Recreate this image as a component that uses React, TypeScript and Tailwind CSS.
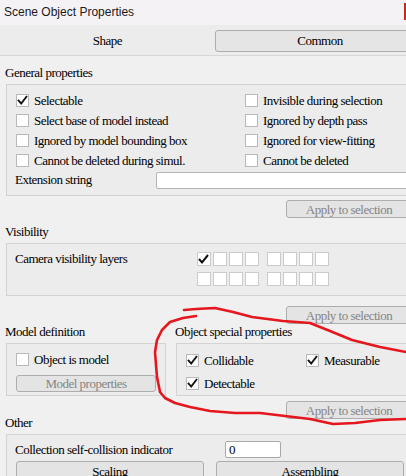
import React from "react";

const Check = ({ checked }: { checked?: boolean }) => (
  <div className="w-[13px] h-[13px] bg-white border border-[#b9b9b9] flex items-center justify-center shrink-0">
    {checked && (
      <svg width="11" height="11" viewBox="0 0 11 11">
        <path d="M1.6 5.6 L4.2 8.6 L9.4 1.8" fill="none" stroke="#111" strokeWidth="1.9" strokeLinecap="square" />
      </svg>
    )}
  </div>
);

const CheckRow = ({ label, checked, h = "h-[20px]" }: { label: string; checked?: boolean; h?: string }) => (
  <div className={`flex items-center gap-[5px] ${h}`}>
    <Check checked={checked} />
    <span className="whitespace-nowrap leading-none">{label}</span>
  </div>
);

const Btn = ({ label, cls, dim }: { label: string; cls: string; dim?: boolean }) => (
  <div
    className={`${cls} shrink-0 border border-[#adadad] rounded-[3px] bg-[#e4e4e4] flex items-center justify-center whitespace-nowrap leading-none ${
      dim ? "text-[#858585]" : "text-black"
    }`}
  >
    {label}
  </div>
);

const Label = ({ text, cls = "" }: { text: string; cls?: string }) => (
  <div className={`h-[16px] leading-[16px] mb-[3px] whitespace-nowrap ${cls}`}>{text}</div>
);

const Cell = ({ checked }: { checked?: boolean }) => (
  <div className="w-[14px] h-[14px] bg-white border border-[#cbcbcb] flex items-center justify-center">
    {checked && (
      <svg width="12" height="12" viewBox="0 0 12 12">
        <path d="M1 6 L4 9.4 L10 2" fill="none" stroke="#111" strokeWidth="2" />
      </svg>
    )}
  </div>
);

const CellGroup = ({ first }: { first?: boolean }) => (
  <div className="flex gap-[2px]">
    <Cell checked={first} />
    <Cell />
    <Cell />
    <Cell />
  </div>
);

export default function App() {
  return (
    <div className="w-[406px] h-[476px] overflow-hidden relative bg-[#f0f0f0] font-['Liberation_Serif',serif] text-[13px] tracking-[-0.5px] text-black">
      {/* Title bar */}
      <div className="h-[25px] bg-[#f5f2f6] flex items-start justify-between pl-[4px] font-['Liberation_Sans',sans-serif] text-[12px] tracking-normal">
        <span className="leading-[24px] text-[#1a1a1a]">Scene Object Properties</span>
        <div className="w-[2px] h-[17px] bg-[#c42b1c] mt-[3px]" />
      </div>

      {/* Tabs */}
      <div className="h-[31px] bg-[#ececec] border-b border-[#d6d6d6] flex">
        <div className="w-[215px] shrink-0 flex items-center justify-center pt-[2px]">Shape</div>
        <div className="pt-[5px] shrink-0">
          <div className="w-[210px] h-[22px] border border-[#adadad] rounded-[3px] bg-[#e5e5e5] flex items-center justify-center">
            Common
          </div>
        </div>
      </div>

      {/* Content */}
      <div className="w-[412px] pl-[5px] pt-[9px] flex flex-col">
        {/* General properties */}
        <Label text="General properties" cls="mb-[2px]" />
        <div className="ml-px border border-[#d3d3d3] bg-[#ececec] pt-[5px] pb-[5px] pl-[9px]">
          <div className="grid grid-cols-[229px_1fr]">
            <CheckRow label="Selectable" checked />
            <CheckRow label="Invisible during selection" />
            <CheckRow label="Select base of model instead" />
            <CheckRow label="Ignored by depth pass" />
            <CheckRow label="Ignored by model bounding  box" />
            <CheckRow label="Ignored for view-fitting" />
            <CheckRow label="Cannot be deleted during simul." />
            <CheckRow label="Cannot be deleted" />
          </div>
          <div className="flex items-center h-[20px] -ml-px">
            <span className="w-[141px] shrink-0 whitespace-nowrap">Extension string</span>
            <div className="w-[252px] shrink-0 h-[17px] bg-white border border-[#b5b5b5] rounded-[2px]" />
          </div>
        </div>
        <div className="flex justify-end mt-[4px]">
          <Btn label="Apply to selection" cls="w-[126px] h-[18px]" dim />
        </div>

        {/* Visibility */}
        <Label text="Visibility" cls="mt-[6px]" />
        <div className="ml-px border border-[#d3d3d3] bg-[#ececec] pt-[8px] pb-[9px] flex">
          <div className="w-[190px] shrink-0 pl-[8px] h-[14px] flex items-center whitespace-nowrap">Camera visibility layers</div>
          <div className="flex flex-col gap-[6px]">
            <div className="flex gap-[8px]">
              <CellGroup first />
              <CellGroup />
            </div>
            <div className="flex gap-[8px]">
              <CellGroup />
              <CellGroup />
            </div>
          </div>
        </div>
        <div className="flex justify-end mt-[10px]">
          <Btn label="Apply to selection" cls="w-[126px] h-[18px]" dim />
        </div>

        {/* Model definition / Object special properties */}
        <div className="flex">
          <div className="w-[161px] shrink-0 flex flex-col">
            <Label text="Model definition" />
            <div className="ml-px h-[53px] border border-[#d3d3d3] bg-[#ececec] pt-[6px] pl-[9px]">
              <CheckRow label="Object is model" h="h-[18px]" />
              <Btn label="Model properties" cls="w-[140px] h-[17px] mt-[7px]" dim />
            </div>
          </div>
          <div className="flex-1 ml-[9px] flex flex-col">
            <Label text="Object special properties" />
            <div className="ml-px h-[53px] border border-[#d3d3d3] bg-[#ececec] pt-[6px] pl-[9px]">
              <div className="grid grid-cols-[120px_1fr] gap-y-[2px]">
                <CheckRow label="Collidable" checked h="h-[21px]" />
                <CheckRow label="Measurable" checked h="h-[21px]" />
                <CheckRow label="Detectable" checked h="h-[21px]" />
              </div>
            </div>
          </div>
        </div>
        <div className="flex justify-end mt-[5px]">
          <Btn label="Apply to selection" cls="w-[126px] h-[18px]" dim />
        </div>

        {/* Other */}
        <Label text="Other" cls="-mt-[4px] mb-[2px]" />
        <div className="ml-px border border-[#d3d3d3] bg-[#ececec] pt-[6px] pl-[9px] h-[60px]">
          <div className="flex items-center h-[17px] -ml-px">
            <span className="w-[210px] shrink-0 whitespace-nowrap">Collection self-collision indicator</span>
            <div className="w-[56px] shrink-0 h-[17px] bg-white border border-[#a9a9a9] rounded-[2px] flex items-center pl-[3px] leading-none">
              0
            </div>
          </div>
          <div className="flex gap-[12px] mt-[3px]">
            <Btn label="Scaling" cls="w-[188px] h-[20px]" />
            <Btn label="Assembling" cls="w-[188px] h-[20px]" />
          </div>
        </div>
      </div>

      {/* Red hand-drawn annotation */}
      <svg className="absolute inset-0 pointer-events-none" width="406" height="476" viewBox="0 0 406 476">
        <path
          d="M184 310 L196 309 L215 308 L233 312 L252 317 L283 321 L310 323 L330 331 L352 340 L380 347 L406 352"
          fill="none"
          stroke="#e5161d"
          strokeWidth="2.6"
          strokeLinejoin="round"
          strokeLinecap="round"
        />
        <path
          d="M196 316 L183 318 L170 322 L162 330 L157 340 L155 352 L156 365 L157 377 L160 392 L165 398 L175 403 L190 407 L210 411 L235 413 L260 413 L285 416 L310 419 L333 424 L355 423 L380 420 L406 419"
          fill="none"
          stroke="#e5161d"
          strokeWidth="2.6"
          strokeLinejoin="round"
          strokeLinecap="round"
        />
      </svg>
    </div>
  );
}
